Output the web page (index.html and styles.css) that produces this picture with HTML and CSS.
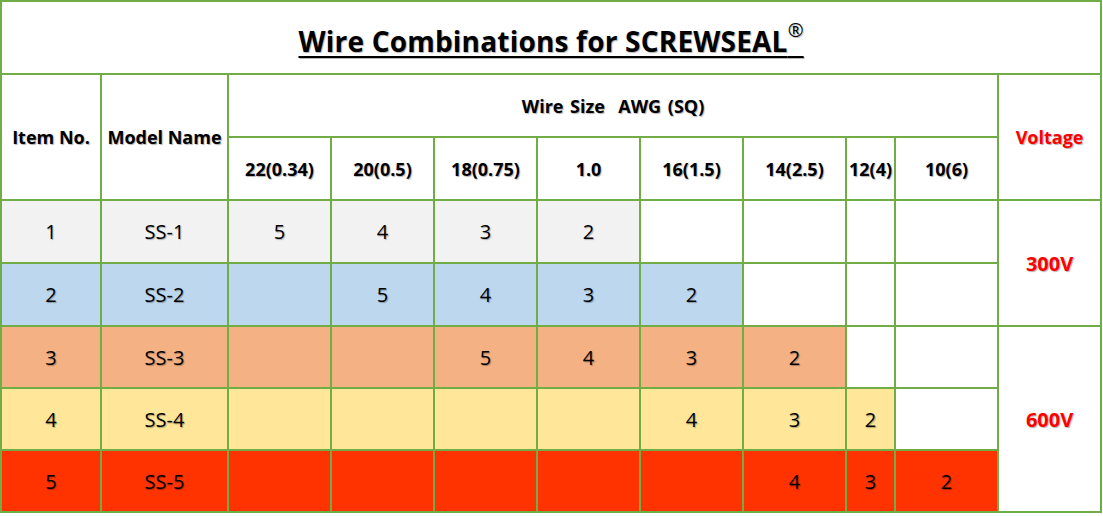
FILE: index.html
```html
<!DOCTYPE html>
<html lang="en">
<head>
  <meta charset="UTF-8" />
  <title>Wire Combinations for SCREWSEAL</title>
  <link rel="stylesheet" href="styles.css">
</head>
<body>

  <table class="wire-table">
    <colgroup>
      <col class="c-item">
      <col class="c-model">
      <col class="c-size"><col class="c-size"><col class="c-size"><col class="c-size">
      <col class="c-size"><col class="c-size">
      <col class="c-narrow">
      <col class="c-size">
      <col class="c-volt">
    </colgroup>

    <!-- Title -->
    <tr class="title-row">
      <td colspan="11" class="title"><span>Wire Combinations for SCREWSEAL<sup>®</sup></span></td>
    </tr>

    <!-- Header -->
    <tr class="head-row">
      <th rowspan="2">Item No.</th>
      <th rowspan="2">Model Name</th>
      <th colspan="8" class="wire-size">Wire Size&nbsp;&nbsp;AWG (SQ)</th>
      <th rowspan="2" class="volt">Voltage</th>
    </tr>
    <tr class="head-row">
      <th>22(0.34)</th>
      <th>20(0.5)</th>
      <th>18(0.75)</th>
      <th>1.0</th>
      <th>16(1.5)</th>
      <th>14(2.5)</th>
      <th>12(4)</th>
      <th>10(6)</th>
    </tr>

    <!-- Data -->
    <tr class="row tall r1">
      <td class="f">1</td><td class="f">SS-1</td>
      <td class="f">5</td><td class="f">4</td><td class="f">3</td><td class="f">2</td>
      <td></td><td></td><td></td><td></td>
      <td rowspan="2" class="volt">300V</td>
    </tr>
    <tr class="row tall r2">
      <td class="f">2</td><td class="f">SS-2</td>
      <td class="f"></td><td class="f">5</td><td class="f">4</td><td class="f">3</td><td class="f">2</td>
      <td></td><td></td><td></td>
    </tr>
    <tr class="row r3">
      <td class="f">3</td><td class="f">SS-3</td>
      <td class="f"></td><td class="f"></td><td class="f">5</td><td class="f">4</td><td class="f">3</td><td class="f">2</td>
      <td></td><td></td>
      <td rowspan="3" class="volt">600V</td>
    </tr>
    <tr class="row r4">
      <td class="f">4</td><td class="f">SS-4</td>
      <td class="f"></td><td class="f"></td><td class="f"></td><td class="f"></td><td class="f">4</td><td class="f">3</td><td class="f">2</td>
      <td></td>
    </tr>
    <tr class="row r5">
      <td class="f">5</td><td class="f">SS-5</td>
      <td class="f"></td><td class="f"></td><td class="f"></td><td class="f"></td><td class="f"></td><td class="f">4</td><td class="f">3</td><td class="f">2</td>
    </tr>
  </table>

</body>
</html>
```

FILE: styles.css
```css
body {
  margin: 0;
  background: #fff;
  font-family: 'Open Sans', 'Noto Sans', sans-serif;
  color: #000;
}

.wire-table {
  width: 1102px;
  table-layout: fixed;
  border-collapse: collapse;
}

.c-item { width: 100px; }
.c-model { width: 127px; }
.c-size { width: 103px; }
.c-narrow { width: 49px; }
.c-volt { width: 103px; }

.wire-table td,
.wire-table th {
  border: 2px solid #70ad47;
  padding: 0;
  text-align: center;
  vertical-align: middle;
  text-shadow: 1px 1px 1px rgba(0, 0, 0, 0.3);
  white-space: nowrap;
}

.title-row { height: 73px; }

.title span {
  position: relative;
  top: 3px;
  font-size: 28px;
  font-weight: 700;
  letter-spacing: 0.2px;
  text-decoration: underline;
  text-decoration-thickness: 2px;
  text-underline-offset: 4px;
}

.title sup {
  font-size: 19px;
  font-weight: 400;
  vertical-align: 15px;
  line-height: 0;
}

.head-row { height: 63px; }

.head-row th {
  font-size: 18px;
  font-weight: 700;
}

.head-row th.wire-size { word-spacing: 2px; }

.row { height: 62px; }
.row.tall { height: 63px; }

.row td {
  font-size: 20px;
}

.volt {
  color: #ff0000;
  font-weight: 700;
  font-size: 18px;
  text-shadow: none;
}

.r1 .f { background: #f2f2f2; }
.r2 .f { background: #bdd7ee; }
.r3 .f { background: #f4b183; }
.r4 .f { background: #ffe699; }
.r5 .f { background: #ff3300; }
```
